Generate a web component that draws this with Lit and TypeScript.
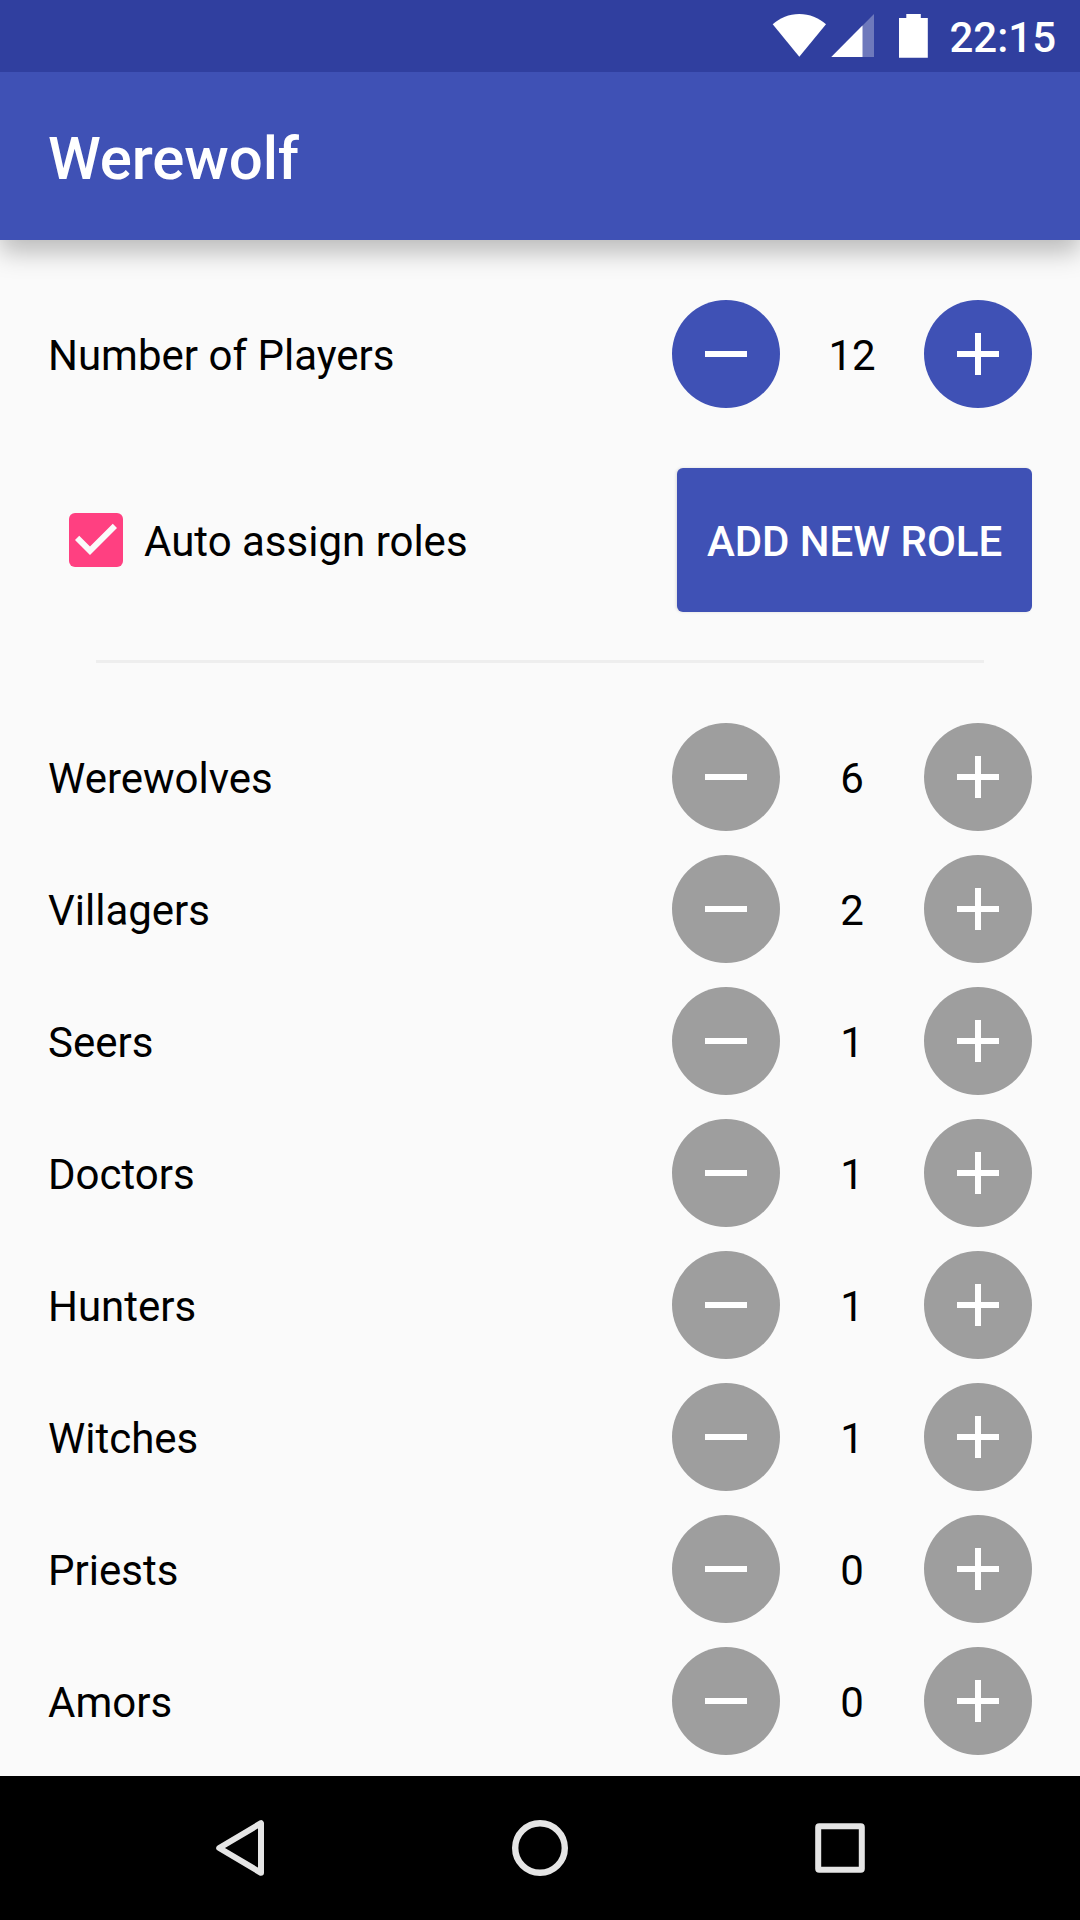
import { LitElement, html, css, svg } from "lit";
import { customElement, property, state } from "lit/decorators.js";
import { classMap } from "lit/directives/class-map.js";

interface Role {
  name: string;
  count: number;
}

@customElement("status-bar")
class StatusBar extends LitElement {
  static styles = css`
    :host {
      display: flex;
      align-items: center;
      justify-content: flex-end;
      height: 72px;
      padding-right: 24px;
      background: #303f9f;
      color: #fff;
      flex: none;
      box-sizing: border-box;
    }
    .icons {
      display: block;
      margin-right: 20px;
    }
    .clock {
      font-size: 42px;
      font-weight: 500;
      line-height: 50px;
      padding-top: 3px;
    }
  `;
  render() {
    return html`
      <svg class="icons" width="158" height="72" viewBox="771 0 158 72" fill="#fff">
        <path d="M799.3 56.8 772.7 24.2C780 18 789 14 799.3 14s19.400 4 26.700 10.200z" />
        <path d="M831.300 57 874 14v43z" opacity=".3" />
        <path d="M831.300 57 862.500 25.600V57z" />
        <path d="M906.300 14h14.500v4h7v39.700h-28.800V18h7.300z" />
      </svg>
      <div class="clock">22:15</div>
    `;
  }
}

@customElement("count-stepper")
class CountStepper extends LitElement {
  @property() label = "";
  @property({ type: Number }) value = 0;
  @property({ type: Boolean }) muted = false;

  static styles = css`
    :host {
      display: flex;
      align-items: center;
      height: 108px;
    }
    .label {
      flex: 1;
      padding-top: 3px;
    }
    .value {
      width: 144px;
      text-align: center;
      padding-top: 3px;
    }
    .round {
      width: 108px;
      height: 108px;
      padding: 0;
      border: 0;
      border-radius: 50%;
      background: #3f51b5;
      display: flex;
      align-items: center;
      justify-content: center;
    }
    .muted {
      background: #9e9e9e;
    }
    .glyph {
      display: block;
    }
  `;

  private step(delta: number) {
    if (!this.muted) {
      this.dispatchEvent(new CustomEvent("step", { detail: delta }));
    }
  }

  private button(delta: number) {
    return html`
      <button
        class=${classMap({ round: true, muted: this.muted })}
        aria-label=${delta > 0 ? "Increase" : "Decrease"}
        @click=${() => this.step(delta)}
      >
        <svg class="glyph" width="42" height="42" viewBox="0 0 42 42" fill="#fff">
          <rect y="18" width="42" height="6" />
          ${delta > 0 ? svg`<rect x="18" width="6" height="42" />` : ""}
        </svg>
      </button>
    `;
  }

  render() {
    return html`
      <div class="label">${this.label}</div>
      ${this.button(-1)}
      <div class="value">${this.value}</div>
      ${this.button(1)}
    `;
  }
}

@customElement("nav-bar")
class NavBar extends LitElement {
  static styles = css`
    :host {
      display: flex;
      align-items: center;
      justify-content: center;
      gap: 240px;
      height: 144px;
      flex: none;
      background: #000;
    }
    .icon {
      display: block;
      fill: none;
      stroke: #e5e5e5;
      stroke-width: 6;
      stroke-linejoin: round;
    }
  `;
  render() {
    return html`
      <svg class="icon" width="60" height="60" viewBox="210 1818 60 60">
        <path d="M261 1823.200v49.600L219.200 1848z" />
      </svg>
      <svg class="icon" width="60" height="60" viewBox="510 1818 60 60">
        <circle cx="540" cy="1848" r="24.800" stroke-width="6.400" />
      </svg>
      <svg class="icon" width="60" height="60" viewBox="810 1818 60 60">
        <rect x="818.200" y="1826.200" width="43.600" height="43.600" rx="1" />
      </svg>
    `;
  }
}

@customElement("app-root")
class AppRoot extends LitElement {
  @state() private players = 12;
  @state() private autoAssign = true;
  @state() private roles: Role[] = [
    { name: "Werewolves", count: 6 },
    { name: "Villagers", count: 2 },
    { name: "Seers", count: 1 },
    { name: "Doctors", count: 1 },
    { name: "Hunters", count: 1 },
    { name: "Witches", count: 1 },
    { name: "Priests", count: 0 },
    { name: "Amors", count: 0 },
  ];

  static styles = css`
    :host {
      display: flex;
      flex-direction: column;
      width: 1080px;
      height: 1920px;
      overflow: hidden;
      background: #fafafa;
      color: #000;
      font-family: Roboto, sans-serif;
      font-size: 42px;
      line-height: 50px;
    }
    .status {
      z-index: 1;
    }
    .toolbar {
      display: flex;
      align-items: center;
      height: 168px;
      flex: none;
      box-sizing: border-box;
      padding: 5px 48px 0;
      background: #3f51b5;
      color: #fff;
      font-size: 60px;
      line-height: 70px;
      font-weight: 500;
      letter-spacing: -0.12px;
      box-shadow: 0 12px 24px rgba(0, 0, 0, 0.26);
    }
    .content {
      flex: 1;
      min-height: 0;
      padding: 60px 48px 0;
    }
    .options {
      display: flex;
      align-items: center;
      justify-content: space-between;
      height: 144px;
      margin-top: 60px;
      padding-left: 21px;
    }
    .check {
      display: flex;
      align-items: center;
      gap: 21px;
    }
    .box {
      display: block;
    }
    .check-label {
      padding-top: 3px;
    }
    .add {
      width: 355px;
      height: 144px;
      border: 0;
      border-radius: 6px;
      padding: 3px 0 0;
      background: #3f51b5;
      color: #fff;
      font: 500 42px/50px Roboto, sans-serif;
      letter-spacing: -0.06px;
      white-space: nowrap;
      box-shadow: -1px 0 3px rgba(0, 0, 0, 0.12);
    }
    .divider {
      height: 3px;
      margin: 48px 48px 60px;
      background: #eeeeee;
    }
    .roles {
      display: flex;
      flex-direction: column;
      gap: 24px;
    }
  `;

  render() {
    return html`
      <status-bar class="status"></status-bar>
      <header class="toolbar">Werewolf</header>
      <main class="content">
        <count-stepper
          label="Number of Players"
          .value=${this.players}
          @step=${(e: CustomEvent<number>) => (this.players += e.detail)}
        ></count-stepper>
        <div class="options">
          <div class="check" @click=${() => (this.autoAssign = !this.autoAssign)}>
            <svg class="box" width="54" height="54" viewBox="3 3 18 18">
              <rect x="3" y="3" width="18" height="18" rx="2" fill="#ff4081" />
              ${this.autoAssign
                ? svg`<path fill="#fafafa" d="M10 17l-5-5 1.410-1.410L10 14.170l7.590-7.590L19 8z" />`
                : svg`<rect x="5" y="5" width="14" height="14" fill="#fafafa" />`}
            </svg>
            <span class="check-label">Auto assign roles</span>
          </div>
          <button class="add">ADD NEW ROLE</button>
        </div>
        <div class="divider"></div>
        <div class="roles">
          ${this.roles.map(
            (role) => html`
              <count-stepper
                label=${role.name}
                .value=${role.count}
                ?muted=${this.autoAssign}
              ></count-stepper>
            `
          )}
        </div>
      </main>
      <nav-bar></nav-bar>
    `;
  }
}
